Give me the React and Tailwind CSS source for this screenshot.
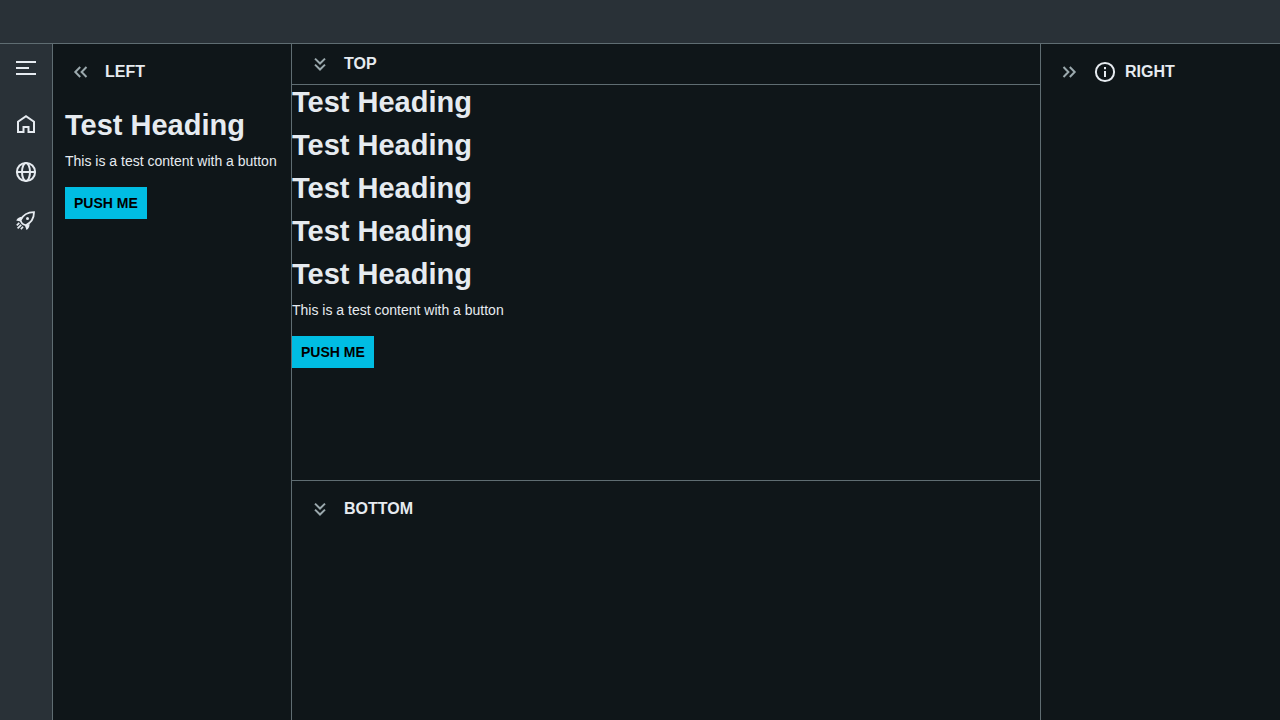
import React from 'react';

function Icon({ className = '', strokeWidth = 2, children }) {
  return (
    <svg
      viewBox="0 0 24 24"
      aria-hidden="true"
      className={`size-6 shrink-0 ${className}`}
      fill="none"
      stroke="currentColor"
      strokeWidth={strokeWidth}
    >
      {children}
    </svg>
  );
}

function MenuIcon() {
  return (
    <Icon>
      <path d="M2 6h20M2 12h13M2 18h20" />
    </Icon>
  );
}

function HomeIcon() {
  return (
    <Icon>
      <path d="M4 9.800V20h5.500v-5h5v5H20V9.800l-8-5.600z" />
    </Icon>
  );
}

function GlobeIcon() {
  return (
    <Icon>
      <circle cx="12" cy="12" r="9.100" />
      <ellipse cx="12" cy="12" rx="4" ry="9" />
      <path d="M3 12h18" />
    </Icon>
  );
}

function RocketIcon() {
  return (
    <Icon>
      <path d="M20 4.200C13.500 4.200 9 7 6.600 12.200c.5 2.700 2.400 4.600 5.100 5C17.500 14.500 20 10 20 4.200z" strokeWidth="1.800" />
      <path
        d="M8.300 8.800C5.500 8.800 3.600 10 2.200 12.400l4.300 1.200zM10.800 17.200l1.700 4.800c2.100-1.300 3.200-3.200 3-6z"
        fill="currentColor"
        stroke="none"
      />
      <circle cx="13.500" cy="10.600" r="1.500" fill="currentColor" stroke="none" />
      <path d="M5.300 14.800l-2.500 2.500M7.200 16.800l-3.600 3.600M9 18.700l-2.100 2.500" strokeWidth="1.700" />
    </Icon>
  );
}

function InfoIcon() {
  return (
    <Icon>
      <circle cx="12" cy="12" r="9.100" />
      <path d="M12 11v6M12 7v2.200" />
    </Icon>
  );
}

const CHEVRONS = {
  left: 'M11.200 7l-4.900 5 4.900 5M17.500 7l-4.900 5 4.900 5',
  right: 'M6.500 7l4.900 5-4.900 5M12.800 7l4.900 5-4.900 5',
  down: 'M7 6.600l5 4.900 5-4.900M7 12.600l5 4.900 5-4.900',
};

function PaneHeader({ title, direction, icon, compact }) {
  return (
    <header className={`flex shrink-0 items-center gap-2 px-3 ${compact ? 'h-10' : 'h-14'}`}>
      <button
        type="button"
        aria-label={`Collapse ${title}`}
        className="flex size-8 shrink-0 items-center justify-center text-[#9ba9ad]"
      >
        <Icon>
          <path d={CHEVRONS[direction]} />
        </Icon>
      </button>
      {icon}
      <h2 className="text-base font-bold">{title}</h2>
    </header>
  );
}

function TestContent({ headings = 1 }) {
  return (
    <div className="flex flex-col items-start">
      {Array.from({ length: headings }, (_, i) => (
        <h1 key={i} className="mb-2 text-[29px] leading-[35px] font-bold whitespace-nowrap">
          Test Heading
        </h1>
      ))}
      <p className="mb-4 text-sm whitespace-nowrap">This is a test content with a button</p>
      <button
        type="button"
        className="h-8 border border-[#00bde3] bg-[#00bde3] px-2 text-sm font-bold text-black"
      >
        PUSH ME
      </button>
    </div>
  );
}

const NAV = [
  { label: 'Home', href: '#home', Glyph: HomeIcon },
  { label: 'World', href: '#world', Glyph: GlobeIcon },
  { label: 'Launch', href: '#launch', Glyph: RocketIcon },
];

export default function App() {
  return (
    <div className="flex h-screen flex-col overflow-hidden bg-[#0f1619] font-['Liberation_Sans',Arial,sans-serif] text-[#e6ebf0]">
      <div className="h-11 shrink-0 border-b border-[#5f6d72] bg-[#293137]" />
      <div className="flex min-h-0 grow">
        <nav
          aria-label="Main"
          className="flex w-[53px] shrink-0 flex-col items-center border-r border-[#5f6d72] bg-[#293137]"
        >
          <button type="button" aria-label="Toggle menu" className="mb-2 flex h-12 w-full items-center justify-center">
            <MenuIcon />
          </button>
          {NAV.map(({ label, href, Glyph }) => (
            <a key={label} href={href} aria-label={label} className="flex h-12 w-full items-center justify-center">
              <Glyph />
            </a>
          ))}
        </nav>

        <aside className="flex w-[239px] shrink-0 flex-col border-r border-[#5f6d72]">
          <PaneHeader title="LEFT" direction="left" />
          <div className="px-3 pt-2">
            <TestContent />
          </div>
        </aside>

        <main className="flex min-w-0 grow flex-col">
          <section className="flex min-h-0 grow flex-col">
            <PaneHeader title="TOP" direction="down" compact />
            <div className="min-h-0 grow overflow-auto border-t border-[#5f6d72]">
              <TestContent headings={5} />
            </div>
          </section>
          <section className="h-60 shrink-0 border-t border-[#5f6d72]">
            <PaneHeader title="BOTTOM" direction="down" />
          </section>
        </main>

        <aside className="w-60 shrink-0 border-l border-[#5f6d72]">
          <PaneHeader title="RIGHT" direction="right" icon={<InfoIcon />} />
        </aside>
      </div>
    </div>
  );
}
